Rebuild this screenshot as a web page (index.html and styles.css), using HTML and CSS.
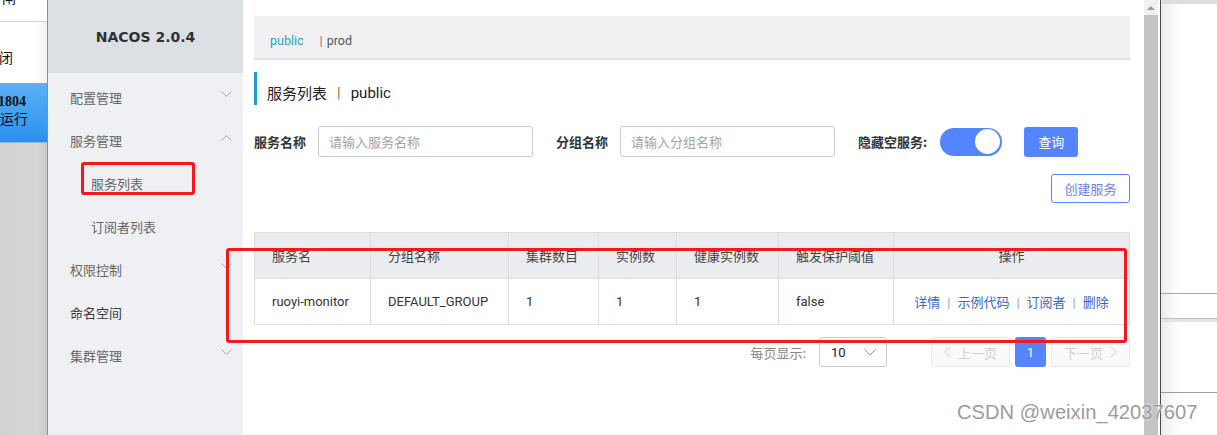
FILE: index.html
```html
<!DOCTYPE html>
<html lang="zh-CN">
<head>
    <meta charset="UTF-8">
    <title>Nacos 服务列表</title>
    <link rel="stylesheet" href="styles.css">
</head>
<body>
    <div class="desktop">
        <!-- 左侧被遮挡的窗口 -->
        <div class="side-window">
            <div class="sw-top"><span class="sw-cut">闸</span></div>
            <div class="sw-item">闭</div>
            <div class="sw-active">
                <b>1804</b>
                <span>运行</span>
            </div>
            <div class="sw-rest"></div>
        </div>

        <aside class="sidebar">
            <div class="brand">NACOS 2.0.4</div>
            <ul class="menu">
                <li class="menu-item">配置管理
                    <svg class="chev" width="11" height="7" viewBox="0 0 11 7"><polyline points="0.5,0.5 5.5,5.5 10.5,0.5"/></svg>
                </li>
                <li class="menu-item">服务管理
                    <svg class="chev" width="11" height="7" viewBox="0 0 11 7"><polyline points="0.5,6.5 5.5,1.5 10.5,6.5"/></svg>
                </li>
                <li class="menu-item sub">服务列表</li>
                <li class="menu-item sub">订阅者列表</li>
                <li class="menu-item">权限控制
                    <svg class="chev" width="11" height="7" viewBox="0 0 11 7"><polyline points="0.5,0.5 5.5,5.5 10.5,0.5"/></svg>
                </li>
                <li class="menu-item strong">命名空间</li>
                <li class="menu-item">集群管理
                    <svg class="chev" width="11" height="7" viewBox="0 0 11 7"><polyline points="0.5,0.5 5.5,5.5 10.5,0.5"/></svg>
                </li>
            </ul>
        </aside>

        <main class="main">
            <div class="ns-bar">
                <span class="ns-active">public</span>
                <span class="ns-sep">|</span>
                <span class="ns-other">prod</span>
            </div>

            <div class="page-title">服务列表 <span class="title-sep">|</span> public</div>

            <div class="filter-row">
                <label class="filter-label">服务名称</label>
                <input class="text-input" type="text" placeholder="请输入服务名称">
                <label class="filter-label gap">分组名称</label>
                <input class="text-input" type="text" placeholder="请输入分组名称">
                <label class="filter-label gap">隐藏空服务:</label>
                <div class="switch"><div class="knob"></div></div>
                <button class="btn-primary">查询</button>
            </div>

            <div class="create-row">
                <button class="btn-outline">创建服务</button>
            </div>

            <table class="service-table">
                <colgroup>
                    <col style="width:116px">
                    <col style="width:138px">
                    <col style="width:90px">
                    <col style="width:78px">
                    <col style="width:102px">
                    <col style="width:115px">
                    <col>
                </colgroup>
                <thead>
                    <tr>
                        <th>服务名</th>
                        <th>分组名称</th>
                        <th>集群数目</th>
                        <th>实例数</th>
                        <th>健康实例数</th>
                        <th>触发保护阈值</th>
                        <th class="center">操作</th>
                    </tr>
                </thead>
                <tbody>
                    <tr>
                        <td>ruoyi-monitor</td>
                        <td>DEFAULT_GROUP</td>
                        <td>1</td>
                        <td>1</td>
                        <td>1</td>
                        <td>false</td>
                        <td class="center ops">
                            <a>详情</a><span class="op-sep">|</span><a>示例代码</a><span class="op-sep">|</span><a>订阅者</a><span class="op-sep">|</span><a>删除</a>
                        </td>
                    </tr>
                </tbody>
            </table>

            <div class="pager">
                <span class="pager-label">每页显示:</span>
                <div class="page-size">
                    <span>10</span>
                    <svg width="12" height="7" viewBox="0 0 12 7"><polyline points="0.5,0.5 6,6 11.5,0.5"/></svg>
                </div>
                <button class="page-btn disabled">
                    <svg width="7" height="12" viewBox="0 0 7 12"><polyline points="6.5,0.5 0.8,6 6.5,11.5"/></svg>
                    上一页
                </button>
                <button class="page-num">1</button>
                <button class="page-btn disabled">
                    下一页
                    <svg width="7" height="12" viewBox="0 0 7 12"><polyline points="0.5,0.5 6.2,6 0.5,11.5"/></svg>
                </button>
            </div>
        </main>

        <div class="scrollbar">
            <div class="scroll-up"><span class="tri"></span></div>
            <div class="scroll-track"></div>
        </div>
        <div class="gutter"></div>

        <!-- 右侧另一个窗口 -->
        <div class="other-window">
            <div class="ow-top"></div>
            <div class="ow-pane ow-a"></div>
            <div class="ow-pane ow-b"></div>
            <div class="ow-pane ow-c"></div>
            <div class="ow-pane ow-d"></div>
        </div>
    </div>

    <!-- 截图上的红色标注框 -->
    <div class="mark mark-menu"></div>
    <div class="mark mark-table"></div>

    <div class="watermark">CSDN @weixin_42037607</div>
</body>
</html>
```

FILE: styles.css
```css
* {
    box-sizing: border-box;
}

body {
    margin: 0;
    padding: 0;
    width: 1217px;
    height: 435px;
    overflow: hidden;
    font-family: Roboto, "Noto Sans CJK SC", sans-serif;
    font-size: 13px;
    color: #333;
    background: #fff;
    position: relative;
}

.desktop {
    display: flex;
    height: 435px;
}

/* 左侧窗口 */
.side-window {
    width: 48px;
    flex-shrink: 0;
    display: flex;
    flex-direction: column;
    border-right: 1px solid #8c8c8c;
    overflow: hidden;
    font-family: "Noto Sans CJK SC", sans-serif;
    color: #111;
}

.sw-top {
    height: 22px;
    background: #fff;
    border-bottom: 1px solid #d4d4d4;
    overflow: hidden;
}

.sw-cut {
    display: block;
    margin-top: -13px;
    margin-left: 2px;
    font-size: 14px;
}

.sw-item {
    height: 61px;
    background: linear-gradient(90deg, #fff 70%, #f2f2f2);
    padding-top: 26px;
    margin-left: -1px;
    font-size: 14px;
    line-height: 18px;
}

.sw-active {
    height: 60px;
    background: linear-gradient(180deg, #5cb0f6, #2b90ef);
    display: flex;
    flex-direction: column;
    padding-top: 11px;
    line-height: 16px;
    font-size: 14px;
    border-bottom: 1px solid #8fb9e0;
}

.sw-active b {
    font-family: "Liberation Serif", serif;
    font-size: 14px;
    margin-left: -2px;
}

.sw-rest {
    flex: 1;
    background: linear-gradient(90deg, #d2d2d2, #d6d6d6 80%, #c9c9c9);
}

/* 侧边菜单 */
.sidebar {
    width: 195px;
    flex-shrink: 0;
    background: #eef0f4;
}

.brand {
    height: 73px;
    background: #dcdfe4;
    display: flex;
    align-items: center;
    justify-content: center;
    font-family: "DejaVu Sans", sans-serif;
    font-weight: bold;
    font-size: 14px;
    color: #2f3133;
    padding-top: 1px;
}

.menu {
    list-style: none;
    margin: 0;
    padding: 3px 0 0;
}

.menu-item {
    height: 43px;
    display: flex;
    align-items: center;
    justify-content: space-between;
    padding: 0 11px 0 22px;
    color: #666;
    font-family: "Noto Sans CJK SC", sans-serif;
    font-size: 13px;
}

.menu-item.sub {
    padding-left: 43px;
}

.menu-item.strong {
    color: #3a3a3a;
}

.chev {
    margin-top: -6px;
    fill: none;
    stroke: #a8a8a8;
    stroke-width: 1;
}

/* 主体 */
.main {
    width: 901px;
    flex-shrink: 0;
    padding: 16px 14px 0 11px;
    background: #fff;
}

.ns-bar {
    height: 44px;
    background: #f1f1f3;
    border-bottom: 2px solid #e2e2e5;
    display: flex;
    align-items: center;
    padding: 6px 0 0 16px;
    font-size: 12.5px;
}

.ns-active {
    color: #1fa3c9;
}

.ns-sep {
    color: #777;
    margin: 0 4px 0 16px;
}

.ns-other {
    color: #555;
}

.page-title {
    margin-top: 12px;
    height: 33px;
    border-left: 3px solid #1a9fcf;
    padding: 8px 0 0 10px;
    display: flex;
    align-items: center;
    font-size: 15px;
    color: #222;
}

.title-sep {
    color: #8b6a3e;
    margin: 0 10px;
}

.filter-row {
    margin-top: 21px;
    height: 31px;
    display: flex;
    align-items: center;
}

.filter-label {
    font-family: "Noto Sans CJK SC", sans-serif;
    font-weight: bold;
    font-size: 13px;
    color: #333;
    margin-right: 12px;
}

.filter-label.gap {
    margin-left: 23px;
}

.text-input {
    width: 215px;
    height: 31px;
    border: 1px solid #c9cbd3;
    border-radius: 3px;
    padding: 0 10px;
    font-family: "Noto Sans CJK SC", sans-serif;
    font-size: 13px;
    outline: none;
}

.text-input::placeholder {
    color: #a3a3a3;
}

.switch {
    width: 62px;
    height: 28px;
    border-radius: 14px;
    background: #5584ff;
    margin-left: 1px;
    display: flex;
    align-items: center;
    justify-content: flex-end;
    padding-right: 2px;
}

.knob {
    width: 25px;
    height: 25px;
    border-radius: 50%;
    background: #fff;
}

.btn-primary {
    margin-left: 22px;
    width: 54px;
    height: 30px;
    border: none;
    border-radius: 3px;
    background: #5584ff;
    color: #fff;
    font-family: "Noto Sans CJK SC", sans-serif;
    font-size: 13px;
}

.create-row {
    margin-top: 17px;
    display: flex;
    justify-content: flex-end;
}

.btn-outline {
    width: 79px;
    height: 29px;
    border: 1px solid #5584ff;
    border-radius: 3px;
    background: #fff;
    color: #6f7fe8;
    font-family: "Noto Sans CJK SC", sans-serif;
    font-size: 13px;
}

/* 表格 */
.service-table {
    margin-top: 29px;
    width: 876px;
    border-collapse: collapse;
    table-layout: fixed;
    border: 1px solid #dcdee3;
}

.service-table th,
.service-table td {
    height: 46px;
    border: 1px solid #dcdee3;
    padding: 0 0 0 17px;
    text-align: left;
    font-size: 13px;
    white-space: nowrap;
}

.service-table th {
    background: #ebecf0;
    font-weight: normal;
    color: #444;
    font-family: "Noto Sans CJK SC", sans-serif;
}

.service-table td {
    color: #333;
}

.service-table .center {
    text-align: center;
    padding: 0;
}

.ops a {
    color: #3a66c4;
    font-family: "Noto Sans CJK SC", sans-serif;
}

.op-sep {
    color: #999;
    margin: 0 7px;
}

/* 分页 */
.pager {
    margin-top: 12px;
    height: 30px;
    display: flex;
    align-items: center;
    justify-content: flex-end;
}

.pager-label {
    font-family: "Noto Sans CJK SC", sans-serif;
    font-size: 13px;
    color: #888;
    margin-right: 13px;
}

.page-size {
    width: 68px;
    height: 30px;
    border: 1px solid #c9cbd3;
    border-radius: 3px;
    display: flex;
    align-items: center;
    justify-content: space-between;
    padding: 0 10px 0 11px;
    color: #222;
    margin-right: 44px;
}

.page-size svg {
    fill: none;
    stroke: #999;
}

.page-btn {
    width: 79px;
    height: 30px;
    border: 1px solid #e8e8ea;
    border-radius: 3px;
    background: #fafafb;
    color: #cfcfd3;
    font-family: "Noto Sans CJK SC", sans-serif;
    font-size: 13px;
    display: flex;
    align-items: center;
    justify-content: center;
    gap: 7px;
    padding: 0;
}

.page-btn svg {
    fill: none;
    stroke: #cfcfd3;
}

.page-num {
    width: 31px;
    height: 30px;
    margin: 0 5px;
    border: none;
    border-radius: 3px;
    background: #5584ff;
    color: #fff;
    font-family: Roboto, sans-serif;
    font-size: 13px;
    padding: 0;
}

/* 滚动条 */
.scrollbar {
    width: 14px;
    flex-shrink: 0;
    display: flex;
    flex-direction: column;
}

.scroll-up {
    height: 15px;
    background: #f1f1f1;
    display: flex;
    align-items: center;
    justify-content: center;
}

.tri {
    width: 0;
    height: 0;
    border-left: 4px solid transparent;
    border-right: 4px solid transparent;
    border-bottom: 4px solid #9a9a9a;
}

.scroll-track {
    flex: 1;
    background: #c4c4c8;
}

.gutter {
    width: 2px;
    flex-shrink: 0;
    background: #fff;
    border-right: 1px solid #4a4a4a;
    box-sizing: content-box;
}

/* 右侧窗口 */
.other-window {
    flex: 1;
    display: flex;
    flex-direction: column;
}

.ow-top {
    height: 4px;
    background: #dedede;
}

.ow-pane {
    background: linear-gradient(90deg, #ececec, #fff 18px);
}

.ow-a {
    height: 290px;
    border-bottom: 1px solid #a9a9a9;
}

.ow-b {
    height: 25px;
    border-bottom: 1px solid #bdbdbd;
}

.ow-c {
    height: 74px;
    border-top: 3px solid #e4e4e4;
    border-bottom: 1px solid #9d9d9d;
}

.ow-d {
    flex: 1;
}

/* 标注 */
.mark {
    position: absolute;
    border: 3px solid #f5191b;
    border-radius: 3px;
}

.mark-menu {
    left: 81px;
    top: 162px;
    width: 114px;
    height: 33px;
}

.mark-table {
    left: 226px;
    top: 248px;
    width: 901px;
    height: 95px;
}

.watermark {
    position: absolute;
    left: 957px;
    top: 401px;
    font-family: "Liberation Sans", sans-serif;
    font-size: 20.2px;
    color: #9b9b9b;
    text-shadow: 0 0 2px #fff;
    white-space: nowrap;
}
```
